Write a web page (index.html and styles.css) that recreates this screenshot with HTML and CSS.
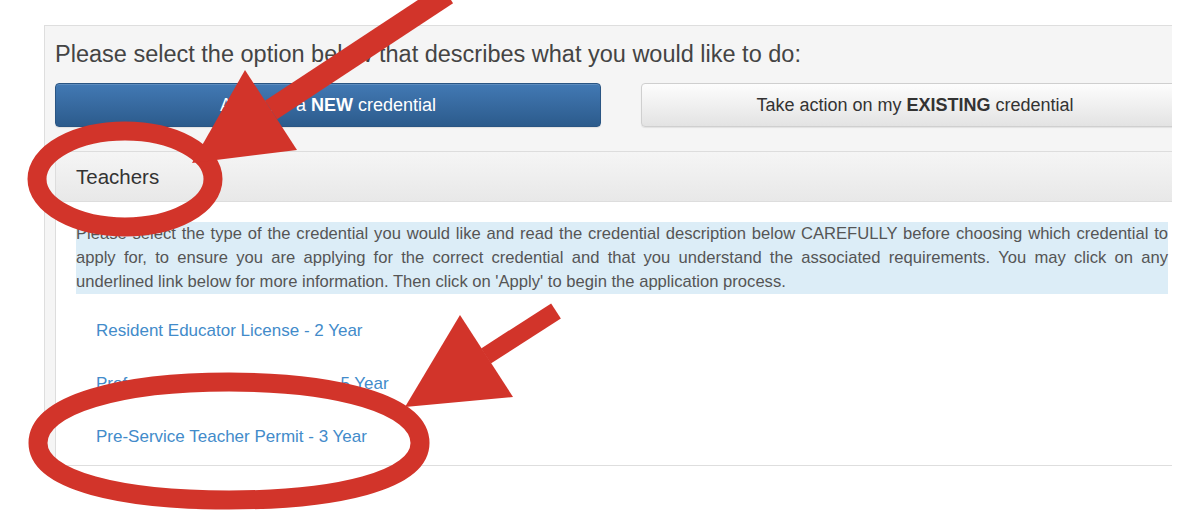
FILE: index.html
```html
<!DOCTYPE html>
<html lang="en">
<head>
<meta charset="utf-8">
<title>Select credential</title>
<link rel="stylesheet" href="styles.css">
</head>
<body>
<div class="viewport">
  <div class="frame">
    <section class="chooser">
      <h1 class="prompt">Please select the option below that describes what you would like to do:</h1>
      <div class="actions">
        <button class="btn btn-primary" type="button">Apply for a <b>NEW</b> credential</button>
        <button class="btn btn-default" type="button">Take action on my <b>EXISTING</b> credential</button>
      </div>
      <div class="panel">
        <div class="panel-heading">Teachers</div>
        <div class="panel-body">
          <p class="info">Please select the type of the credential you would like and read the credential description below CAREFULLY before choosing which credential to apply for, to ensure you are applying for the correct credential and that you understand the associated requirements. You may click on any underlined link below for more information. Then click on 'Apply' to begin the application process.</p>
          <ul class="creds">
            <li><a href="#">Resident Educator License - 2 Year</a></li>
            <li><a href="#">Professional Teaching License - 5 Year</a></li>
            <li><a href="#">Pre-Service Teacher Permit - 3 Year</a></li>
          </ul>
        </div>
      </div>
    </section>
  </div>
  <svg class="marks" width="1200" height="528" viewBox="0 0 1200 528" aria-hidden="true">
    <g fill="none" stroke="#d2342a">
      <ellipse cx="125" cy="179" rx="88" ry="48" stroke-width="19"/>
      <path d="M38,443 C38,404 122,382 229,382 C336,382 420,404 420,443 C420,481 336,500 229,500 C122,500 38,481 38,443 Z" stroke-width="19"/>
      <line x1="271" y1="110" x2="447" y2="-6" stroke-width="22"/>
      <line x1="486" y1="356" x2="556" y2="311" stroke-width="18"/>
    </g>
    <g fill="#d2342a">
      <polygon points="192,163 245,70 297,150"/>
      <polygon points="405,407 460,315 513,397"/>
    </g>
  </svg>
</div>
</body>
</html>
```

FILE: styles.css
```css
html, body {
  margin: 0;
  background: #fff;
  font-family: "Liberation Sans", Arial, sans-serif;
}

.viewport {
  position: relative;
  width: 1200px;
  height: 528px;
  overflow: hidden;
}

.frame {
  width: 1128px;
  margin-left: 44px;
  padding-top: 25px;
  overflow: hidden;
}

.chooser {
  box-sizing: border-box;
  width: 1156px;
  background: #f5f5f5;
  border: 1px solid #dedede;
  padding: 0 10px;
}

.prompt {
  margin: 0;
  padding-top: 16px;
  font-size: 23.5px;
  line-height: 24px;
  font-weight: normal;
  color: #444;
}

.actions {
  display: grid;
  grid-template-columns: 546px 548px;
  column-gap: 40px;
  margin-top: 17px;
}

.btn {
  height: 44px;
  padding: 0;
  border-radius: 4px;
  font-family: inherit;
  font-size: 18px;
  cursor: pointer;
}

.btn b {
  font-weight: bold;
}

.btn-primary {
  color: #fff;
  background: linear-gradient(#4279b4, #2c5b8c);
  border: 1px solid #2a5583;
  box-shadow: inset 0 1px 0 rgba(255, 255, 255, 0.15), 0 1px 1px rgba(0, 0, 0, 0.08);
}

.btn-default {
  color: #333;
  background: linear-gradient(#fdfdfd, #e3e3e3);
  border: 1px solid #cfcfcf;
  box-shadow: inset 0 1px 0 rgba(255, 255, 255, 0.15), 0 1px 1px rgba(0, 0, 0, 0.08);
}

.panel {
  margin-top: 24px;
  background: #fff;
  border: 1px solid #dddddd;
  border-bottom: 0;
  border-radius: 4px 4px 0 0;
}

.panel-heading {
  height: 49px;
  line-height: 49px;
  padding: 0 20px;
  font-size: 20.5px;
  color: #333;
  background: linear-gradient(#f5f5f5, #e8e8e8);
  border-bottom: 1px solid #dddddd;
  border-radius: 3px 3px 0 0;
}

.panel-body {
  padding: 20px 20px 16px;
}

.info {
  margin: 0;
  background: #dcedf7;
  color: #555;
  font-size: 16.6px;
  line-height: 24px;
  text-align: justify;
}

.creds {
  list-style: none;
  margin: 25px 0 0;
  padding: 0 0 0 20px;
  font-size: 17px;
  line-height: 24px;
}

.creds li + li {
  margin-top: 29px;
}

.creds a {
  color: #428bca;
  text-decoration: none;
}

.marks {
  position: absolute;
  left: 0;
  top: 0;
  pointer-events: none;
}
```
